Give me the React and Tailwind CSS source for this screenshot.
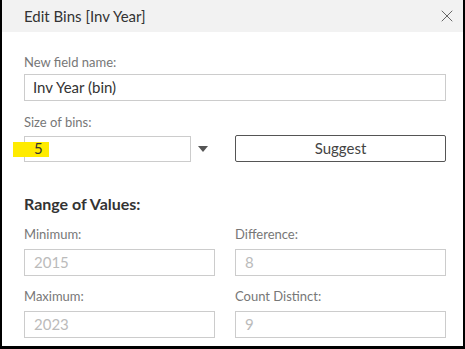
import { X } from 'lucide-react';

const Label = ({ children, className = '' }) => (
  <div className={`text-[13px] leading-4 text-[#777] ${className}`}>{children}</div>
);

const ReadOnlyBox = ({ value }) => (
  <div className="h-[27px] border border-[#cccccc] flex items-center pl-[9px] text-[15px] text-[#bbbbbb]">
    {value}
  </div>
);

const App = () => {
  return (
    <div
      className="w-[465px] h-[349px] bg-white border-l-2 border-r-2 border-b-[3px] border-black flex flex-col text-[#333]"
      style={{ fontFamily: 'Lato, "Liberation Sans", sans-serif' }}
    >
      <div className="h-8 bg-[#f2f2f2] flex items-center justify-between pl-[22px] pr-[6px]">
        <span className="text-[15px] text-[#333]">Edit Bins [Inv Year]</span>
        <X className="w-5 h-5 text-[#666]" strokeWidth={1.2} />
      </div>

      <div className="pl-[22px] pr-[17px] flex flex-col">
        <Label className="mt-[22px]">New field name:</Label>
        <div className="mt-[4px] h-[27px] border border-[#cccccc] flex items-center pl-[8px] text-[15px] text-[#333]">
          Inv Year (bin)
        </div>

        <Label className="mt-[13px]">Size of bins:</Label>
        <div className="mt-[5px] flex items-center">
          <div className="relative w-[167px] h-[26px] border border-[#cccccc] flex items-center">
            <span className="absolute left-[-12px] top-[5px] w-9 h-[15px] bg-[#ffeb00]" />
            <span className="relative pl-[9px] text-[15px] text-[#333]">5</span>
          </div>
          <svg className="ml-[7px]" width="10" height="6" viewBox="0 0 10 6">
            <path d="M0 0 L10 0 L5 6 Z" fill="#555" />
          </svg>
          <button className="ml-[27px] flex-1 h-[27px] border border-[#555] rounded-[2px] text-[15px] text-[#444] flex items-center justify-center">
            Suggest
          </button>
        </div>

        <div className="mt-[32px] text-[16px] font-bold leading-5 text-[#333]">Range of Values:</div>

        <div className="mt-[12px] grid grid-cols-[191px_1fr] gap-x-[20px]">
          <div>
            <Label>Minimum:</Label>
            <div className="mt-[7px]"><ReadOnlyBox value="2015" /></div>
          </div>
          <div>
            <Label>Difference:</Label>
            <div className="mt-[7px]"><ReadOnlyBox value="8" /></div>
          </div>
          <div className="mt-[12px]">
            <Label>Maximum:</Label>
            <div className="mt-[7px]"><ReadOnlyBox value="2023" /></div>
          </div>
          <div className="mt-[12px]">
            <Label>Count Distinct:</Label>
            <div className="mt-[7px]"><ReadOnlyBox value="9" /></div>
          </div>
        </div>
      </div>
    </div>
  );
};

export default App;
